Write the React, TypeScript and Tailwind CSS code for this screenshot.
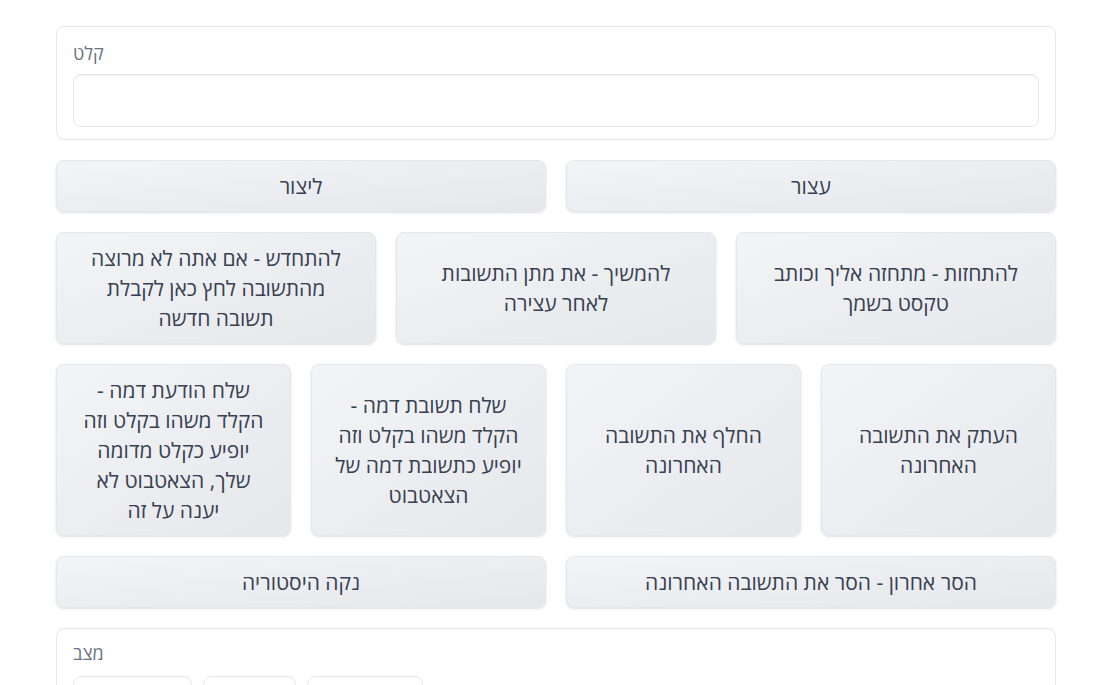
const font = { fontFamily: '"Open Sans", "Noto Sans", sans-serif' };

function Btn({ children, className = '' }: { children: React.ReactNode; className?: string }) {
  return (
    <button
      className={`flex items-center justify-center rounded-lg border border-[#e5e7eb] bg-gradient-to-br from-[#f3f4f6] to-[#e5e7eb] px-[21px] text-center text-[21px] leading-[30px] font-medium text-[#374151] shadow-sm ${className}`}
    >
      <span dir="rtl">{children}</span>
    </button>
  );
}

export default function App() {
  return (
    <div className="min-h-screen bg-white" style={font}>
      <div className="ml-[56px] flex w-[1000px] flex-col gap-5 pt-[26px]">
        {/* input block */}
        <div className="rounded-lg border border-[#e5e7eb] bg-white px-4 pt-[13px] pb-[12px]">
          <div className="mb-[8px] text-[18px] leading-[26px] text-[#6b7280]">קלט</div>
          <textarea
            dir="rtl"
            rows={1}
            className="block h-[53px] w-full resize-none rounded-lg border border-[#e5e7eb] bg-white px-3 py-2 shadow-[inset_0_1px_2px_rgba(0,0,0,0.05)] outline-none"
          />
        </div>

        <div className="grid grid-cols-2 gap-5">
          <Btn className="h-[52px]">ליצור</Btn>
          <Btn className="h-[52px]">עצור</Btn>
        </div>

        <div className="grid grid-cols-3 gap-5">
          <Btn className="h-[112px]">להתחדש - אם אתה לא מרוצה מהתשובה לחץ כאן לקבלת תשובה חדשה</Btn>
          <Btn className="h-[112px]">להמשיך - את מתן התשובות לאחר עצירה</Btn>
          <Btn className="h-[112px]">להתחזות - מתחזה אליך וכותב טקסט בשמך</Btn>
        </div>

        <div className="grid grid-cols-4 gap-5">
          <Btn className="h-[172px]">שלח הודעת דמה - הקלד משהו בקלט וזה יופיע כקלט מדומה שלך, הצאטבוט לא יענה על זה</Btn>
          <Btn className="h-[172px]">שלח תשובת דמה - הקלד משהו בקלט וזה יופיע כתשובת דמה של הצאטבוט</Btn>
          <Btn className="h-[172px]">החלף את התשובה האחרונה</Btn>
          <Btn className="h-[172px]">העתק את התשובה האחרונה</Btn>
        </div>

        <div className="grid grid-cols-2 gap-5">
          <Btn className="h-[52px]">נקה היסטוריה</Btn>
          <Btn className="h-[52px]">הסר אחרון - הסר את התשובה האחרונה</Btn>
        </div>

        <div className="rounded-lg border border-[#e5e7eb] bg-white px-4 pt-[11px] pb-4">
          <div className="mb-[10px] text-[18px] leading-[26px] text-[#6b7280]">מצב</div>
          <div className="flex gap-[11px]">
            <div className="h-[40px] w-[119px] rounded-lg border border-[#e5e7eb] bg-white" />
            <div className="h-[40px] w-[93px] rounded-lg border border-[#e5e7eb] bg-white" />
            <div className="h-[40px] w-[116px] rounded-lg border border-[#e5e7eb] bg-white" />
          </div>
        </div>
      </div>
    </div>
  );
}
